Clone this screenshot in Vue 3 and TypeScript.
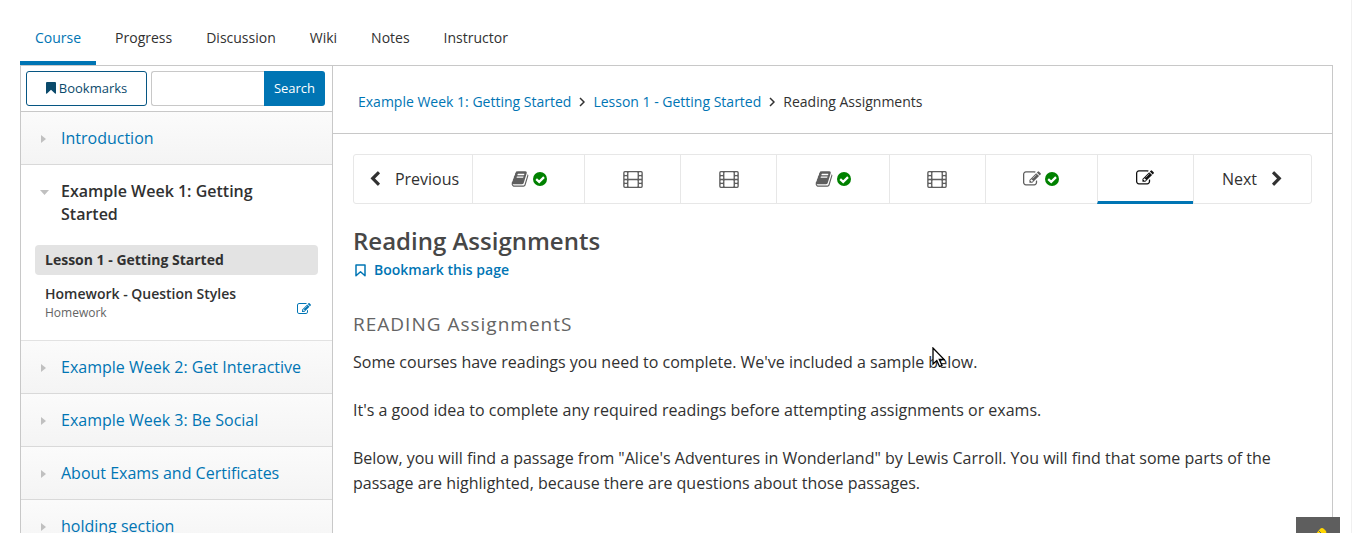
<script setup lang="ts">
import { ref } from 'vue'

interface Unit {
  kind: 'book' | 'film' | 'edit'
  label: string
  done: boolean
  active: boolean
}

const tabs: string[] = ['Course', 'Progress', 'Discussion', 'Wiki', 'Notes', 'Instructor']
const laterSections: string[] = [
  'Example Week 2: Get Interactive',
  'Example Week 3: Be Social',
  'About Exams and Certificates',
  'holding section',
]
const units: Unit[] = [
  { kind: 'book', label: 'Reading, completed', done: true, active: false },
  { kind: 'film', label: 'Video', done: false, active: false },
  { kind: 'film', label: 'Video', done: false, active: false },
  { kind: 'book', label: 'Reading, completed', done: true, active: false },
  { kind: 'film', label: 'Video', done: false, active: false },
  { kind: 'edit', label: 'Problem, completed', done: true, active: false },
  { kind: 'edit', label: 'Reading Assignments', done: false, active: true },
]
const query = ref('')

const editPath =
  'M888 1184l116-116-152-152-116 116v56h96v96h56zm440-720q-16-16-33 1l-350 350q-17 17-1 33t33-1l350-350q17-17 1-33zm80 594v190q0 119-84.5 203.5t-203.5 84.5h-832q-119 0-203.5-84.5t-84.5-203.5v-832q0-119 84.5-203.5t203.5-84.5h832q63 0 117 25 15 7 18 23 3 17-9 29l-49 49q-14 14-32 8-23-6-45-6h-832q-66 0-113 47t-47 113v832q0 66 47 113t113 47h832q66 0 113-47t47-113v-126q0-13 9-22l64-64q15-15 35-7t20 29zm-96-738l288 288-672 672h-288v-288zm444 132l-92 92-288-288 92-92q28-28 68-28t68 28l152 152q28 28 28 68t-28 68z'
const bookPath =
  'M1703 478q40 57 18 129l-275 906q-19 64-76.5 107.5t-122.5 43.5h-923q-77 0-148.5-53.5t-99.500-131.500q-24-67-2-127 0-4 3-27t4-37q1-8-3-21.500t-3-19.500q2-11 8-21t16.500-23.500 16.500-23.500q23-38 45-91.500t30-91.500q3-10 .5-30t-.5-28q3-11 17-28t17-23q21-36 42-92t25-90q1-9-2.500-32t.5-28q4-13 22-30.500t22-22.500q19-26 42.500-84.500t27.500-96.500q1-8-3-25.500t-2-26.500q2-8 9-18t18-23 17-21q8-12 16.500-30.500t15-35 16-36 19.500-32 26.500-23.500 36-11.500 47.500 5.500l-1 3q38-9 51-9h761q74 0 114 56t18 130l-274 906q-36 119-71.500 153.500t-128.500 34.500h-869q-27 0-38 15-11 16-1 43 24 70 144 70h923q29 0 56-15.500t35-41.500l300-987q7-22 5-57 38 15 59 43zm-1064 2q-4 13 2 22.500t20 9.500h608q13 0 25.500-9.500t16.500-22.500l21-64q4-13-2-22.500t-20-9.500h-608q-13 0-25.500 9.500t-16.500 22.500zm-83 256q-4 13 2 22.500t20 9.500h608q13 0 25.500-9.500t16.500-22.500l21-64q4-13-2-22.500t-20-9.500h-608q-13 0-25.500 9.500t-16.500 22.500z'

// Film strip: an outer frame, two picture panels and four holes down each side.
const holeRows = [128, 512, 896, 1280]
const hole = (x: number, y: number): string =>
  `M${x + 64} ${y}h128q64 0 64 64v128q0 64-64 64h-128q-64 0-64-64v-128q0-64 64-64z`
const panel = (y: number): string =>
  `M576 ${y}h768q64 0 64 64v512q0 64-64 64h-768q-64 0-64-64v-512q0-64 64-64z`
const filmPath = [
  'M160 0h1600q160 0 160 160v1344q0 160-160 160h-1600q-160 0-160-160v-1344q0-160 160-160z',
  panel(128),
  panel(896),
  ...holeRows.map((y) => hole(128, y)),
  ...holeRows.map((y) => hole(1536, y)),
].join('')
</script>

<template>
  <div class="page">
    <nav class="tabs" aria-label="Course">
      <a v-for="(tab, i) in tabs" :key="tab" href="#" class="tab" :class="{ current: i === 0 }">{{ tab }}</a>
    </nav>

    <div class="frame">
      <aside class="sidebar">
        <div class="tools">
          <button type="button" class="bookmarks">
            <svg class="mark" viewBox="0 0 10 12" aria-hidden="true"><path d="M0 1Q0 0 1 0H9Q10 0 10 1V11Q10 12 9 11.400L5 7.800 1 11.400Q0 12 0 11Z" fill="currentColor" /></svg>Bookmarks
          </button>
          <form class="search" @submit.prevent>
            <input v-model="query" type="text" aria-label="Search the course" />
            <button type="submit">Search</button>
          </form>
        </div>

        <button type="button" class="section">
          <svg class="caret" viewBox="0 0 10 10" aria-hidden="true"><path d="M2 1L7 5 2 9Z" fill="#c0c0c0" /></svg>
          <span>Introduction</span>
        </button>
        <div class="open-section">
          <button type="button" class="section open">
            <svg class="caret" viewBox="0 0 10 10" aria-hidden="true"><path d="M1 3H10L5.500 8Z" fill="#c0c0c0" /></svg>
            <span>Example Week 1: Getting Started</span>
          </button>
          <a href="#" class="lesson selected">Lesson 1 - Getting Started</a>
          <a href="#" class="lesson homework">
            <span>
              <span class="name">Homework - Question Styles</span>
              <span class="type">Homework</span>
            </span>
            <svg class="small-edit" viewBox="0 0 1792 1792" aria-hidden="true"><path :d="editPath" fill="currentColor" /></svg>
          </a>
        </div>
        <button v-for="name in laterSections" :key="name" type="button" class="section">
          <svg class="caret" viewBox="0 0 10 10" aria-hidden="true"><path d="M2 1L7 5 2 9Z" fill="#c0c0c0" /></svg>
          <span>{{ name }}</span>
        </button>
      </aside>

      <main class="content">
        <nav class="crumbs" aria-label="Breadcrumb">
          <a href="#">Example Week 1: Getting Started</a>
          <svg class="angle" viewBox="0 0 6 10" aria-hidden="true"><path d="M1 1L5 5 1 9" fill="none" stroke="#313131" stroke-width="1.500" /></svg>
          <a href="#">Lesson 1 - Getting Started</a>
          <svg class="angle" viewBox="0 0 6 10" aria-hidden="true"><path d="M1 1L5 5 1 9" fill="none" stroke="#313131" stroke-width="1.500" /></svg>
          <span>Reading Assignments</span>
        </nav>

        <div class="body">
          <div class="sequence">
            <button type="button" class="step previous">
              <svg class="chevron" viewBox="0 0 1792 1792" aria-hidden="true"><path fill="currentColor" d="M1427 301l-531 531 531 531q19 19 19 45t-19 45l-166 166q-19 19-45 19t-45-19l-742-742q-19-19-19-45t19-45l742-742q19-19 45-19t45 19l166 166q19 19 19 45t-19 45z" /></svg>
              <span>Previous</span>
            </button>
            <button
              v-for="(unit, i) in units"
              :key="i"
              type="button"
              class="unit"
              :class="{ done: unit.done, active: unit.active }"
              :aria-label="unit.label"
            >
              <svg v-if="unit.kind === 'film'" class="film" viewBox="0 0 1920 1664" aria-hidden="true">
                <path :d="filmPath" fill="currentColor" fill-rule="evenodd" />
              </svg>
              <svg v-else class="glyph" viewBox="0 0 1792 1792" aria-hidden="true">
                <path :d="unit.kind === 'book' ? bookPath : editPath" fill="currentColor" />
              </svg>
              <svg v-if="unit.done" class="check" viewBox="0 0 14 14" aria-hidden="true">
                <circle cx="7" cy="7" r="7" fill="#008100" />
                <path d="M3.200 7.100L6.200 9.900 11 5.100" fill="none" stroke="#fff" stroke-width="2.200" />
              </svg>
            </button>
            <button type="button" class="step next">
              <span>Next</span>
              <svg class="chevron" viewBox="0 0 1792 1792" aria-hidden="true"><path fill="currentColor" d="M1363 877l-742 742q-19 19-45 19t-45-19l-166-166q-19-19-19-45t19-45l531-531-531-531q-19-19-19-45t19-45l166-166q19-19 45-19t45 19l742 742q19 19 19 45t-19 45z" /></svg>
            </button>
          </div>

          <h1>Reading Assignments</h1>
          <button type="button" class="bookmark-page">
            <svg viewBox="0 0 11 13" aria-hidden="true"><path d="M1 1H10V11.700L5.500 7.800 1 11.700Z" fill="none" stroke="currentColor" stroke-width="1.500" stroke-linejoin="round" /></svg>
            <span>Bookmark this page</span>
          </button>
          <h2>READING AssignmentS</h2>
          <p>Some courses have readings you need to complete. We've included a sample below.</p>
          <p>It's a good idea to complete any required readings before attempting assignments or exams.</p>
          <p>Below, you will find a passage from "Alice's Adventures in Wonderland" by Lewis Carroll. You will find that some parts of the passage are highlighted, because there are questions about those passages.</p>
        </div>
      </main>
    </div>

    <button type="button" class="note-toggle" aria-label="Toggle notes">
      <svg viewBox="0 0 20 20" aria-hidden="true"><path d="M2 14L12 2Q14 0 16 2L18 4Q19 6 17 8L7 19 1 20Z" fill="#ffd600" /><path d="M11 4L16 9" stroke="#5e5e5e" stroke-width="1" /></svg>
    </button>
    <svg class="pointer" viewBox="0 0 13 21" aria-hidden="true"><path d="M1 1V17L4.800 13.500 7.500 19.500 10 18.400 7.300 12.500H12.200Z" fill="#fff" stroke="#000" stroke-width="1.300" /></svg>
  </div>
</template>

<style>
html,
body {
  margin: 0;
  height: 100%;
  overflow: hidden;
  background: #fff;
}
</style>

<style scoped>
.page {
  position: relative;
  box-sizing: border-box;
  height: 100vh;
  overflow: hidden;
  padding: 0 18px 0 20px;
  display: flex;
  flex-direction: column;
  border-right: 1px solid #f0f0f0;
  color: #313131;
  font-family: 'Open Sans', sans-serif;
  font-size: 14px;
}
button,
input {
  box-sizing: border-box;
  margin: 0;
  padding: 0;
  border: 0;
  background: none;
  color: inherit;
  font: inherit;
}
a {
  color: #0075b4;
  text-decoration: none;
}
svg {
  display: block;
  flex: none;
}
.tabs {
  display: flex;
  gap: 4px;
  padding-top: 10px;
}
.tab {
  padding: 18px 15px 13px;
  border-bottom: 4px solid transparent;
  line-height: 20px;
  color: #313131;
}
.tab.current {
  color: #0075b4;
  border-bottom-color: #0075b4;
}
.frame {
  flex: 1;
  min-height: 0;
  display: flex;
  border: 1px solid #c8c8c8;
  border-bottom: 0;
}
.sidebar {
  flex: none;
  width: 311px;
  border-right: 1px solid #c8c8c8;
}
.tools {
  display: flex;
  gap: 4px;
  padding: 5px 7px 5px 5px;
  border-bottom: 1px solid #c8c8c8;
}
.bookmarks {
  flex: none;
  display: flex;
  align-items: center;
  justify-content: center;
  gap: 3px;
  width: 121px;
  height: 35px;
  padding-bottom: 2px;
  border: 1px solid #065683;
  border-radius: 3px;
  font-size: 13px;
  color: #0b4a6b;
}
.mark {
  width: 10px;
  height: 12px;
}
.search {
  flex: 1;
  min-width: 0;
  display: flex;
}
.search input {
  flex: 1;
  width: 0;
  min-width: 0;
  height: 35px;
  padding: 0 8px;
  border: 1px solid #c8c8c8;
  border-right: 0;
  border-radius: 3px 0 0 3px;
}
.search button {
  flex: none;
  width: 61px;
  height: 35px;
  padding-bottom: 2px;
  border-radius: 0 3px 3px 0;
  background: #0075b4;
  color: #fff;
  font-size: 13px;
}
.section {
  display: flex;
  align-items: flex-start;
  gap: 12px;
  width: 100%;
  padding: 15px 20px 14px 18px;
  border-bottom: 1px solid #d9d9d9;
  background: linear-gradient(#fbfbfb, #f4f4f4);
  text-align: left;
  font-size: 16px;
  line-height: 23px;
  color: #0075b4;
}
.caret {
  width: 10px;
  height: 10px;
  margin-top: 7px;
}
.section.open {
  background: none;
  border-bottom: 0;
  font-weight: 600;
  color: #313131;
}
.open-section {
  padding-bottom: 15px;
  border-bottom: 1px solid #e2e2e2;
}
.lesson {
  display: block;
  margin: 5px 14px 0;
  padding: 5px 10px;
  border-radius: 4px;
  line-height: 20px;
  font-weight: 600;
  color: #313131;
}
.lesson.selected {
  background: #e3e3e3;
  font-weight: 700;
}
.lesson.homework {
  display: flex;
  align-items: center;
  justify-content: space-between;
  padding: 4px 7px 4px 10px;
}
.name,
.type {
  display: block;
}
.type {
  font-size: 12px;
  line-height: 17px;
  font-weight: 400;
  color: #646464;
}
.small-edit {
  width: 14px;
  height: 14px;
  margin-top: 13px;
  color: #0075b4;
}
.content {
  flex: 1;
  min-width: 0;
}
.crumbs {
  display: flex;
  align-items: center;
  gap: 8px;
  padding: 25px 25px 21px;
  border-bottom: 1px solid #c8c8c8;
  line-height: 21px;
}
.angle {
  width: 6px;
  height: 10px;
}
.body {
  padding: 20px;
}
.sequence {
  display: flex;
  height: 50px;
  box-sizing: border-box;
  border: 1px solid #e7e7e7;
  border-radius: 3px;
  font-size: 16px;
}
.step {
  flex: none;
  display: flex;
  align-items: center;
  justify-content: center;
  gap: 12px;
  width: 118px;
}
.chevron {
  width: 16px;
  height: 16px;
}
.unit {
  flex: 96 1 0;
  display: flex;
  align-items: center;
  justify-content: center;
  gap: 4px;
  border-left: 1px solid #e7e7e7;
  color: #5e5e5e;
}
.unit.done {
  flex-grow: 112;
}
.unit.active {
  margin-bottom: -1px;
  border-bottom: 3px solid #0075b4;
  color: #111;
}
.next {
  padding-left: 2px;
  border-left: 1px solid #e7e7e7;
}
.film {
  width: 20px;
  height: 17px;
}
.glyph {
  width: 18px;
  height: 18px;
}
.check {
  width: 14px;
  height: 14px;
}
h1 {
  margin: 20px 0 0;
  font-size: 24px;
  line-height: 34px;
  font-weight: 600;
  color: #474747;
}
.bookmark-page {
  display: flex;
  align-items: center;
  gap: 8px;
  padding-left: 2px;
  line-height: 24px;
  font-weight: 600;
  color: #0075b4;
}
.bookmark-page svg {
  width: 11px;
  height: 13px;
}
h2 {
  margin: 29px 0 12px;
  font-size: 19px;
  line-height: 27px;
  font-weight: 400;
  letter-spacing: 1px;
  color: #646464;
}
p {
  margin: 0 0 23px;
  font-size: 16px;
  line-height: 25px;
}
.note-toggle {
  position: absolute;
  right: 11px;
  bottom: 0;
  width: 44px;
  height: 16px;
  overflow: hidden;
  background: #5e5e5e;
}
.note-toggle svg {
  width: 20px;
  height: 20px;
  margin: 10px 0 0 12px;
}
.pointer {
  position: absolute;
  left: 932px;
  top: 347px;
  width: 13px;
  height: 21px;
}
</style>
